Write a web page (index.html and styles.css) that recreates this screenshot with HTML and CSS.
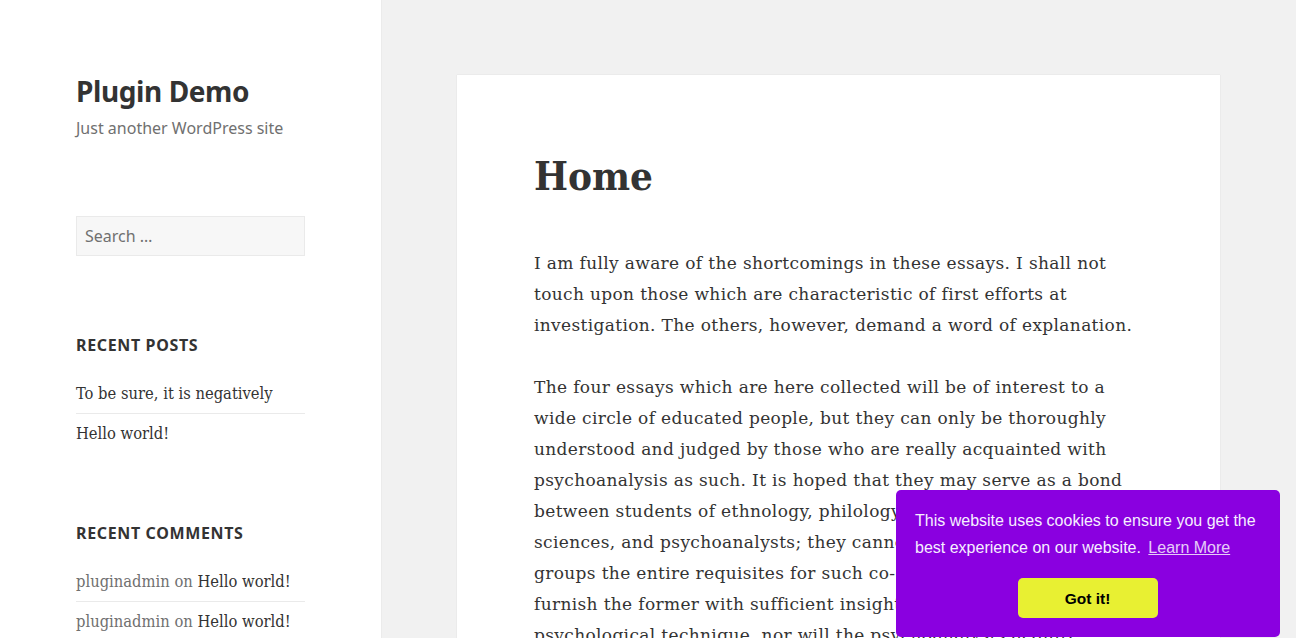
FILE: index.html
```html
<!DOCTYPE html>
<html lang="en">
<head>
<meta charset="utf-8">
<title>Plugin Demo – Just another WordPress site</title>
<link rel="stylesheet" href="styles.css">
</head>
<body>
<div class="site">
  <aside class="sidebar">
    <header class="site-header">
      <p class="site-title">Plugin Demo</p>
      <p class="site-description">Just another WordPress site</p>
    </header>
    <div class="widgets">
      <section class="widget widget-search">
        <input class="search-field" type="search" placeholder="Search …">
      </section>
      <section class="widget">
        <h2 class="widget-title">Recent Posts</h2>
        <ul class="widget-list">
          <li><a href="#">To be sure, it is negatively</a></li>
          <li><a href="#">Hello world!</a></li>
        </ul>
      </section>
      <section class="widget">
        <h2 class="widget-title">Recent Comments</h2>
        <ul class="widget-list">
          <li><span class="comment-author">pluginadmin</span> on <a href="#">Hello world!</a></li>
          <li><span class="comment-author">pluginadmin</span> on <a href="#">Hello world!</a></li>
        </ul>
      </section>
    </div>
  </aside>
  <main class="site-main">
    <article class="page">
      <h1 class="entry-title">Home</h1>
      <div class="entry-content">
        <p>I am fully aware of the shortcomings in these essays. I shall not touch upon those which are characteristic of first efforts at investigation. The others, however, demand a word of explanation.</p>
        <p>The four essays which are here collected will be of interest to a wide circle of educated people, but they can only be thoroughly understood and judged by those who are really acquainted with psychoanalysis as such. It is hoped that they may serve as a bond between students of ethnology, philology, folklore and of the allied sciences, and psychoanalysts; they cannot, however, supply to both groups the entire requisites for such co-operation. They will not furnish the former with sufficient insight into the new psychological technique, nor will the psychoanalysts acquire through them an adequate command of the material to be elaborated.</p>
      </div>
    </article>
  </main>
</div>
<div class="cookie-window" role="dialog">
  <p class="cookie-message">This website uses cookies to ensure you get the best experience on our website. <a class="cookie-link" href="#">Learn More</a></p>
  <div class="cookie-compliance">
    <a class="cookie-btn" href="#">Got it!</a>
  </div>
</div>
</body>
</html>
```

FILE: styles.css
```css
* { box-sizing: border-box; }

html, body {
  margin: 0;
  padding: 0;
}

body {
  background: #f1f1f1;
  color: #333333;
  font-family: "DejaVu Serif", serif;
  font-size: 17px;
  line-height: 31px;
  overflow: hidden;
}

a { color: #333333; text-decoration: none; }

.site {
  display: flex;
  min-height: 100vh;
}

.sidebar {
  width: 381px;
  flex: 0 0 381px;
  background: #ffffff;
  box-shadow: 0 0 1px rgba(0, 0, 0, 0.15);
  padding: 74px 76px 0;
}

.site-title {
  margin: 0;
  font-family: "Noto Sans", sans-serif;
  font-weight: 700;
  font-size: 28px;
  letter-spacing: -0.4px;
  line-height: 35px;
  color: #333333;
}

.site-description {
  margin: 7px 0 0;
  font-family: "Noto Sans", sans-serif;
  font-size: 16px;
  line-height: 24px;
  color: #707070;
}

.widgets {
  margin-top: 76px;
}

.widget { margin-bottom: 68px; }
.widget-search { margin-bottom: 77px; }

.search-field {
  display: block;
  width: 229px;
  height: 40px;
  background: #f7f7f7;
  border: 1px solid #eaeaea;
  border-radius: 0;
  padding: 0 8px;
  font-family: "Noto Sans", sans-serif;
  font-size: 16px;
  color: #333;
  outline: none;
}
.search-field::placeholder { color: #707070; opacity: 1; }

.widget-title {
  margin: 0 0 17px;
  font-family: "Noto Sans", sans-serif;
  font-weight: 700;
  font-size: 16px;
  line-height: 24px;
  letter-spacing: 0.04em;
  text-transform: uppercase;
  color: #333333;
}

.widget-list {
  list-style: none;
  margin: 0;
  padding: 0;
  width: 229px;
  font-family: "DejaVu Serif Condensed", "DejaVu Serif", serif;
  font-size: 16.4px;
  line-height: 25px;
}

.widget-list li {
  padding: 7px 0;
  border-top: 1px solid #eaeaea;
}
.widget-list li:first-child { border-top: 0; }

.comment-author, .widget-list li { color: #707070; }
.widget-list a { color: #333333; }

.site-main {
  flex: 1;
  padding: 75px 76px 0;
}

.page {
  background: #ffffff;
  box-shadow: 0 0 1px rgba(0, 0, 0, 0.15);
  padding: 77px 76px 76px 77px;
}

.entry-title {
  margin: 0 0 48px;
  font-family: "DejaVu Serif Condensed", "DejaVu Serif", serif;
  font-size: 40px;
  line-height: 48px;
  font-weight: 700;
  color: #333333;
}

.entry-content p {
  margin: 0 0 31px;
  letter-spacing: 0.35px;
}

.cookie-window {
  position: fixed;
  right: 16px;
  bottom: 1px;
  width: 384px;
  background: #8a00e0;
  color: #f6efff;
  border-radius: 5px;
  padding: 17px 20px 19px 19px;
  font-family: "Liberation Sans", Arial, sans-serif;
  font-size: 16px;
  line-height: 27px;
}

.cookie-message {
  margin: 0 0 17px;
}

.cookie-link {
  color: #ffffff;
  opacity: 0.8;
  text-decoration: underline;
  margin-left: 3px;
}

.cookie-compliance {
  display: flex;
  justify-content: center;
}

.cookie-btn {
  display: flex;
  align-items: center;
  justify-content: center;
  width: 140px;
  height: 40px;
  background: #e8f032;
  color: #000000;
  border-radius: 5px;
  font-weight: 700;
  font-size: 15.5px;
}
```
